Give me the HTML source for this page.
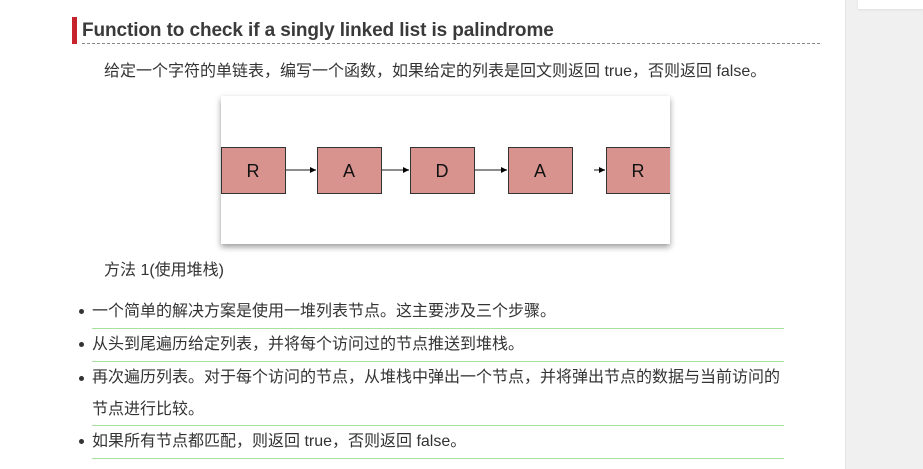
<!DOCTYPE html>
<html><head><meta charset="utf-8"><style>
body{margin:0;width:923px;height:469px;background:#f0f0f0;font-family:"Liberation Sans","Noto Sans CJK SC",sans-serif;color:#333;overflow:hidden;position:relative}
.main{position:absolute;left:0;top:0;width:845px;height:469px;background:#fff;border-right:1px solid #e4e4e4}
.card{position:absolute;left:858px;top:0;width:65px;height:9px;background:#fff;box-shadow:0 1px 2px #ddd}
.bar{position:absolute;left:72px;top:17px;width:5px;height:27px;background:#c7232d}
h2{position:absolute;left:82px;top:18px;margin:0;font-size:19px;font-weight:bold;color:#3a3a3a;line-height:26px;white-space:nowrap;letter-spacing:-0.1px}
.dot{position:absolute;left:82px;top:43px;width:738px;border-top:1px dashed #888}
.t{position:absolute;font-size:16px;white-space:nowrap;line-height:20px}
.img{position:absolute;left:221px;top:96px;width:449px;height:148px;background:#fff;box-shadow:0 3px 6px rgba(0,0,0,.4)}
.li{position:absolute;left:92px;width:692px;border-bottom:1px solid #a8e0a0;font-size:16px;line-height:33px;white-space:nowrap}
.li:before{content:"";position:absolute;left:-13px;top:14px;width:5px;height:5px;border-radius:50%;background:#333}
</style></head><body>
<div class="main">
<div class="bar"></div>
<h2>Function to check if a singly linked list is palindrome</h2>
<div class="dot"></div>
<div class="t" style="left:104px;top:62px">给定一个字符的单链表，编写一个函数，如果给定的列表是回文则返回 true，否则返回 false。</div>
<div class="img"><svg width="449" height="148" viewBox="221 96 449 148">
<defs><marker id="a" markerWidth="4" markerHeight="4" refX="4" refY="2" orient="auto" markerUnits="strokeWidth"><path d="M0,0L4,2L0,4z" fill="#000"/></marker></defs>
<g fill="#d9938f" stroke="#333" stroke-width="1">
<rect x="221.5" y="147.5" width="64" height="46"/><rect x="317.5" y="147.5" width="64" height="46"/><rect x="410.5" y="147.5" width="64" height="46"/><rect x="508.5" y="147.5" width="64" height="46"/><rect x="606.5" y="147.5" width="64" height="46"/></g>
<g stroke="#666" stroke-width="1.5" marker-end="url(#a)"><line x1="286" y1="170" x2="316" y2="170"/><line x1="382" y1="170" x2="409" y2="170"/><line x1="475" y1="170" x2="507" y2="170"/><line x1="594" y1="170" x2="605" y2="170"/></g>
<g font-family="Liberation Sans" font-size="18" fill="#111" text-anchor="middle"><text x="253" y="177">R</text><text x="349" y="177">A</text><text x="442" y="177">D</text><text x="540" y="177">A</text><text x="638" y="177">R</text></g>
</svg></div>
<div class="t" style="left:104px;top:261px">方法 1(使用堆栈)</div>
<div class="li" style="top:295px">一个简单的解决方案是使用一堆列表节点。这主要涉及三个步骤。</div>
<div class="li" style="top:328px">从头到尾遍历给定列表，并将每个访问过的节点推送到堆栈。</div>
<div class="li" style="top:362px;line-height:31.5px">再次遍历列表。对于每个访问的节点，从堆栈中弹出一个节点，并将弹出节点的数据与当前访问的<br>节点进行比较。</div>
<div class="li" style="top:425px">如果所有节点都匹配，则返回 true，否则返回 false。</div>
</div>
<div class="card"></div>
</body></html>
